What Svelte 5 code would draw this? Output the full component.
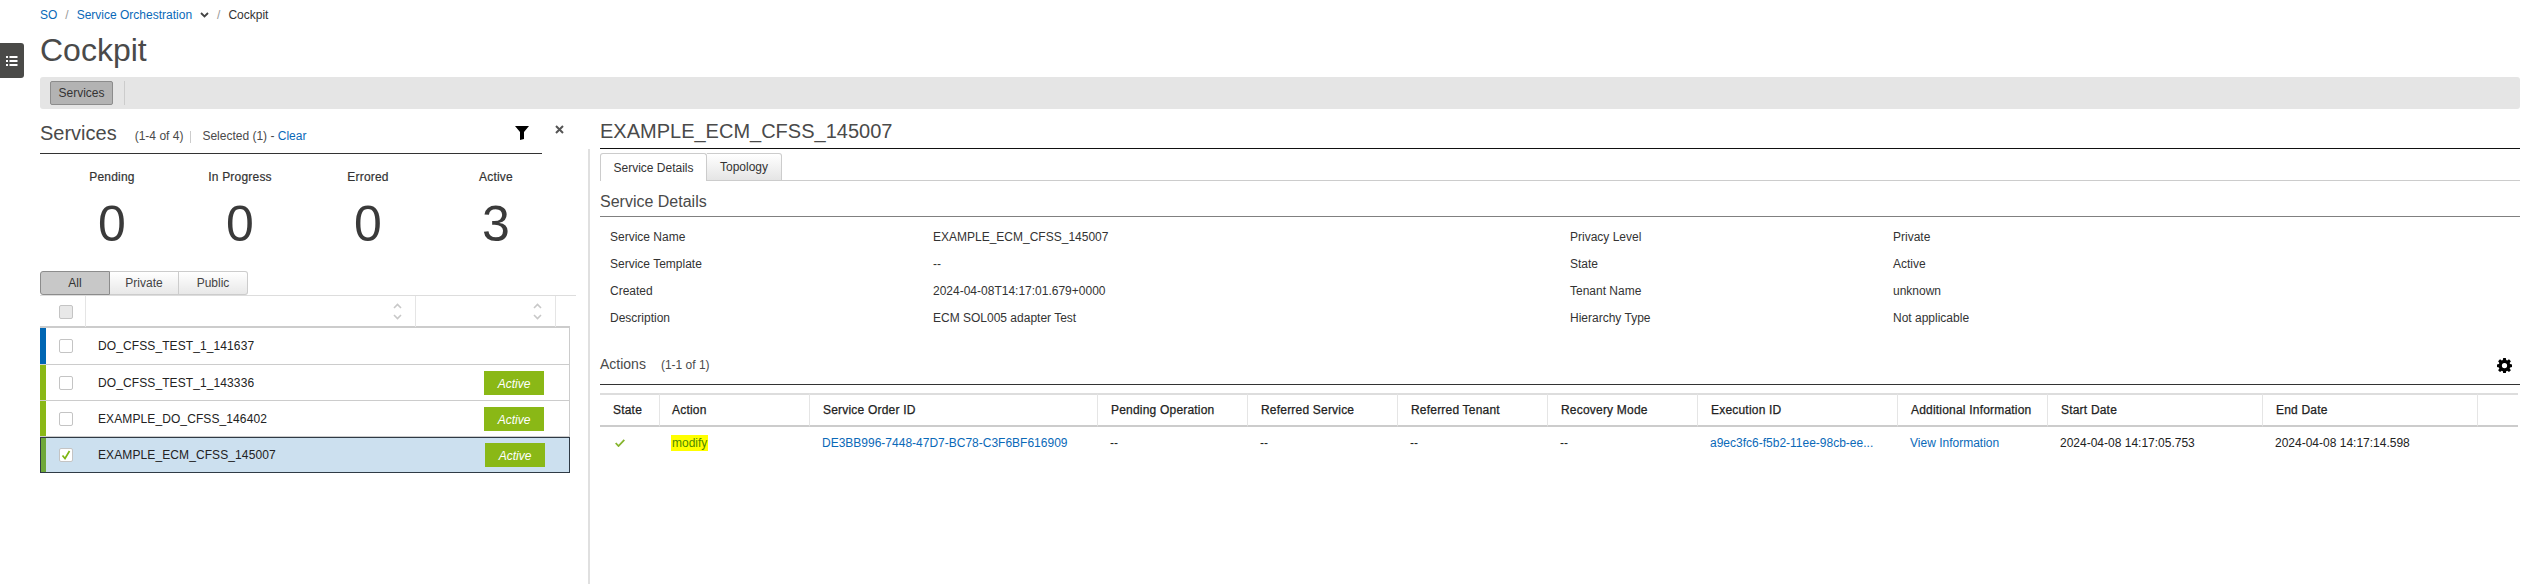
<script>
  const stats = [
    { label: 'Pending', value: 0 },
    { label: 'In Progress', value: 0 },
    { label: 'Errored', value: 0 },
    { label: 'Active', value: 3 }
  ];
  const services = [
    { name: 'DO_CFSS_TEST_1_141637', tone: 'blue', active: false, selected: false },
    { name: 'DO_CFSS_TEST_1_143336', tone: 'green', active: true, selected: false },
    { name: 'EXAMPLE_DO_CFSS_146402', tone: 'green', active: true, selected: false },
    { name: 'EXAMPLE_ECM_CFSS_145007', tone: 'green', active: true, selected: true }
  ];
  const detailsLeft = [
    ['Service Name', 'EXAMPLE_ECM_CFSS_145007'],
    ['Service Template', '--'],
    ['Created', '2024-04-08T14:17:01.679+0000'],
    ['Description', 'ECM SOL005 adapter Test']
  ];
  const detailsRight = [
    ['Privacy Level', 'Private'],
    ['State', 'Active'],
    ['Tenant Name', 'unknown'],
    ['Hierarchy Type', 'Not applicable']
  ];
  const columns = ['State', 'Action', 'Service Order ID', 'Pending Operation', 'Referred Service', 'Referred Tenant', 'Recovery Mode', 'Execution ID', 'Additional Information', 'Start Date', 'End Date', ''];
</script>

<div class="page">
  <button class="side-tab" aria-label="Open list">
    <svg width="12" height="12" viewBox="0 0 12 12" fill="#fff">
      <rect x="0" y="1" width="2" height="2" /><rect x="3.5" y="1" width="8" height="2" />
      <rect x="0" y="5" width="2" height="2" /><rect x="3.5" y="5" width="8" height="2" />
      <rect x="0" y="9" width="2" height="2" /><rect x="3.5" y="9" width="8" height="2" />
    </svg>
  </button>

  <nav class="crumbs">
    <a href="#so">SO</a><span class="slash">/</span>
    <a href="#orch">Service Orchestration</a>
    <svg class="chev" width="9" height="6" viewBox="0 0 9 6"><path d="M1 1l3.5 3.500L8 1" fill="none" stroke="#444" stroke-width="1.800" /></svg>
    <span class="slash">/</span><span class="here">Cockpit</span>
  </nav>
  <h1>Cockpit</h1>

  <div class="toolbar">
    <button class="tool-btn">Services</button>
    <span class="tool-sep"></span>
  </div>

  <div class="split">
    <section class="left">
      <header class="left-head">
        <h2>Services</h2>
        <span class="count">(1-4 of 4)</span>
        <span class="pipe"></span>
        <span class="sel">Selected (1) - <a href="#clear">Clear</a></span>
        <svg class="filter" width="14" height="14" viewBox="0 0 14 14"><path d="M0 0h14L9 6v7l-4 1V6z" fill="#000" /></svg>
      </header>
      <svg class="close" width="9" height="9" viewBox="0 0 9 9"><path d="M1 1l7 7M8 1L1 8" stroke="#555" stroke-width="2" /></svg>

      <div class="stats">
        {#each stats as s}
          <div class="stat">
            <div class="stat-label">{s.label}</div>
            <div class="stat-num">{s.value}</div>
          </div>
        {/each}
      </div>

      <div class="seg">
        <button class="on">All</button><button>Private</button><button>Public</button>
      </div>

      <div class="list-head">
        <div class="lh-check"><span class="box head-box"></span></div>
        <div class="lh-name">
          <svg width="9" height="17" viewBox="0 0 9 17"><path d="M1 5l3.500-3.500L8 5M1 12l3.500 3.500L8 12" fill="none" stroke="#c8c8c8" stroke-width="1.600" /></svg>
        </div>
        <div class="lh-state">
          <svg width="9" height="17" viewBox="0 0 9 17"><path d="M1 5l3.500-3.500L8 5M1 12l3.500 3.500L8 12" fill="none" stroke="#c8c8c8" stroke-width="1.600" /></svg>
        </div>
      </div>

      <ul class="rows">
        {#each services as s}
          <li class="row {s.tone}" class:selected={s.selected}>
            <span class="bar"></span>
            <span class="box">
              {#if s.selected}
                <svg width="10" height="10" viewBox="0 0 10 10"><path d="M1.500 5.500l2.500 3L8.500 1" fill="none" stroke="#7db512" stroke-width="1.700" /></svg>
              {/if}
            </span>
            <span class="row-name">{s.name}</span>
            {#if s.active}<span class="badge">Active</span>{/if}
          </li>
        {/each}
      </ul>
    </section>

    <section class="right">
      <h2 class="detail-title">EXAMPLE_ECM_CFSS_145007</h2>
      <div class="detail-body">
        <div class="tabs">
          <button class="tab current">Service Details</button>
          <button class="tab">Topology</button>
        </div>
        <h3>Service Details</h3>
        <div class="details">
          <dl>
            {#each detailsLeft as d}<dt>{d[0]}</dt><dd>{d[1]}</dd>{/each}
          </dl>
          <dl>
            {#each detailsRight as d}<dt>{d[0]}</dt><dd>{d[1]}</dd>{/each}
          </dl>
        </div>

        <div class="actions-head">
          <h4>Actions</h4>
          <span class="count">(1-1 of 1)</span>
          <svg class="gear" width="15" height="15" viewBox="0 0 16 16">
            <path fill="#000" fill-rule="evenodd" d="M6.600 0h2.800l.4 2.200 1.100.5 1.900-1.300 2 2-1.300 1.900.5 1.100 2 .4v2.800l-2 .4-.5 1.100 1.300 1.900-2 2-1.900-1.300-1.100.5-.4 2.200H6.600l-.4-2.200-1.100-.5-1.900 1.300-2-2 1.300-1.900-.5-1.100-2-.4V6.800l2-.4.5-1.100-1.300-1.900 2-2 1.900 1.300 1.100-.5zM8 5.200a2.800 2.800 0 1 0 0 5.600 2.800 2.800 0 0 0 0-5.600z" />
          </svg>
        </div>

        <table>
          <thead>
            <tr>{#each columns as c}<th>{c}</th>{/each}</tr>
          </thead>
          <tbody>
            <tr>
              <td><svg class="ok" width="10" height="8" viewBox="0 0 10 8"><path d="M.7 4l2.800 3L9.300.8" fill="none" stroke="#86b52e" stroke-width="1.800" /></svg></td>
              <td><mark>modify</mark></td>
              <td><a href="#order">DE3BB996-7448-47D7-BC78-C3F6BF616909</a></td>
              <td>--</td>
              <td>--</td>
              <td>--</td>
              <td>--</td>
              <td><a href="#exec">a9ec3fc6-f5b2-11ee-98cb-ee...</a></td>
              <td><a href="#info">View Information</a></td>
              <td>2024-04-08 14:17:05.753</td>
              <td>2024-04-08 14:17:14.598</td>
              <td></td>
            </tr>
          </tbody>
        </table>
      </div>
    </section>
  </div>
</div>

<style>
  :global(body) { margin: 0; background: #fff; }
  .page {
    position: relative;
    height: 584px;
    overflow: hidden;
    box-sizing: border-box;
    padding: 0 26px 0 40px;
    font-family: "Liberation Sans", Arial, sans-serif;
    font-size: 12px;
    color: #333;
  }
  a { color: #0a69b8; text-decoration: none; }
  button { font-family: inherit; font-size: 12px; margin: 0; cursor: pointer; }
  ul { list-style: none; margin: 0; padding: 0; }
  h1, h2, h3, h4, dl, dd, dt { margin: 0; font-weight: 400; }

  .side-tab {
    position: absolute; left: 0; top: 43px;
    width: 24px; height: 35px; padding: 0;
    background: #4a4a48; border: 0; border-radius: 0 3px 3px 0;
    display: flex; align-items: center; justify-content: center;
  }

  .crumbs { height: 29px; display: flex; align-items: center; white-space: nowrap; }
  .slash { color: #999; margin: 0 8px; }
  .chev { margin-left: 8px; }

  h1 { font-size: 32px; line-height: 42px; height: 48px; color: #4a4a4a; }

  .toolbar {
    height: 32px; background: #e5e5e5; border-radius: 3px;
    display: flex; align-items: center; padding-left: 10px; box-sizing: border-box;
  }
  .tool-btn {
    width: 63px; height: 24px; padding: 0; background: #b3b3b3; color: #333;
    border: 1px solid #8c8c8c; border-radius: 2px;
  }
  .tool-sep { width: 1px; height: 24px; background: #ccc; margin-left: 11px; }

  .split { display: flex; align-items: stretch; height: 475px; }

  .left { position: relative; width: 548px; flex: none; padding-top: 11px; box-sizing: border-box; }
  .left-head {
    position: relative; width: 502px; height: 34px; box-sizing: border-box;
    display: flex; align-items: baseline; white-space: nowrap;
    border-bottom: 1px solid #333;
  }
  .left-head h2 { font-size: 20px; line-height: 26px; color: #4a4a4a; }
  .count { margin-left: 18px; color: #4a4a4a; }
  .pipe { width: 1px; height: 12px; background: #ccc; margin-left: 7px; align-self: center; }
  .sel { margin-left: 11px; color: #4a4a4a; }
  .filter { position: absolute; left: 475px; top: 6px; }
  .close { position: absolute; left: 515px; top: 16px; }

  .stats { display: flex; width: 512px; margin-left: 8px; }
  .stat { width: 128px; text-align: center; }
  .stat-label { margin-top: 16px; line-height: 15px; letter-spacing: .2px; -webkit-text-stroke: .2px #333; }
  .stat-num { font-size: 50px; line-height: 60px; margin-top: 9px; color: #3a3a3a; }

  .seg { display: flex; height: 24px; margin-top: 17px; }
  .seg button {
    width: 69px; padding: 0; color: #444; background: linear-gradient(#fff, #e8e8e8);
    border: 1px solid #ccc; border-left: 0;
  }
  .seg button:last-child { border-radius: 0 3px 3px 0; }
  .seg .on {
    width: 70px; background: #c8c8c8; border: 1px solid #8c8c8c; border-radius: 3px 0 0 3px; color: #333;
  }

  .list-head {
    display: flex; width: 536px; height: 32px; box-sizing: border-box;
    border-top: 1px solid #ddd;
  }
  .lh-check {
    width: 46px; padding-left: 19px; box-sizing: border-box;
    display: flex; align-items: center; border-right: 1px solid #e5e5e5;
  }
  .lh-name, .lh-state {
    display: flex; align-items: center; justify-content: flex-end;
    padding-right: 13px; box-sizing: border-box; border-right: 1px solid #e5e5e5;
  }
  .lh-name { width: 330px; }
  .lh-state { width: 140px; }
  .box {
    width: 14px; height: 14px; box-sizing: border-box; background: #fff;
    border: 1px solid #c4c4c4; border-radius: 2px;
    display: flex; align-items: center; justify-content: center; flex: none;
  }
  .head-box { background: #e8e8e8; }

  .rows { width: 530px; box-sizing: border-box; border-top: 2px solid #ccc; margin-top: -1px; }
  .row {
    display: flex; align-items: center; height: 36px; box-sizing: border-box;
    border-bottom: 1px solid #ccc; border-right: 1px solid #ccc; color: #222;
  }
  .row:first-child { height: 37px; }
  .bar { width: 6px; align-self: stretch; flex: none; }
  .blue .bar { background: #0066b3; }
  .green .bar { background: #8ab816; }
  .row .box { margin-left: 13px; }
  .row-name { margin-left: 25px; flex: 1; letter-spacing: .1px; }
  .badge {
    width: 60px; height: 24px; background: #8ab816; color: #fff; font-style: italic;
    text-align: center; line-height: 26px; margin-right: 25px;
  }
  .selected { background: #cce0ef; border: 1px solid #2f3a45; border-left-width: 1px; }
  .selected .bar { background: #6ea83a; width: 5px; }
  .selected .badge { margin-right: 24px; }

  .right { flex: 1; min-width: 0; display: flex; flex-direction: column; }
  .detail-title {
    margin-left: 12px; padding-top: 9px; height: 40px; box-sizing: border-box;
    font-size: 20px; line-height: 26px; color: #4a4a4a; white-space: nowrap;
    border-bottom: 1px solid #111;
  }
  .detail-body { flex: 1; border-left: 2px solid #e0e0e0; padding-left: 10px; }

  .tabs {
    display: flex; height: 28px; margin-top: 4px; box-sizing: border-box;
    border-bottom: 1px solid #ccc;
  }
  .tab {
    height: 28px; padding: 0; color: #333; border: 1px solid #ccc; border-left: 0;
    border-radius: 0 3px 0 0; width: 75px; background: linear-gradient(#fff, #e5e5e5);
  }
  .tab.current {
    width: 107px; background: #fff; border-left: 1px solid #ccc; border-bottom: 0;
    border-radius: 3px 3px 0 0;
  }

  h3 {
    margin-top: 11px; padding-bottom: 4px; font-size: 16px; line-height: 20px;
    color: #4a4a4a; border-bottom: 1px solid #808080;
  }

  .details { display: flex; margin-top: 6px; }
  dl { flex: 0 0 960px; display: grid; grid-template-columns: 333px 1fr; grid-auto-rows: 27px; align-items: center; }
  dt { padding-left: 10px; color: #333; }
  dd { color: #333; }

  .actions-head {
    display: flex; align-items: baseline; height: 33px; box-sizing: border-box;
    margin-top: 21px; border-bottom: 1px solid #333;
  }
  h4 { font-size: 14px; line-height: 24px; color: #4a4a4a; }
  .actions-head .count { margin-left: 15px; }
  .gear { margin-left: auto; margin-right: 8px; align-self: flex-start; margin-top: 6px; }

  table { width: 1918px; margin-top: 8px; table-layout: fixed; border-spacing: 0; }
  th {
    height: 34px; padding: 0 0 0 13px; box-sizing: border-box; text-align: left;
    font-weight: 400; color: #222; letter-spacing: .2px; -webkit-text-stroke: .25px #222;
    border-top: 2px solid #ddd; border-bottom: 2px solid #ccc; border-right: 1px solid #e5e5e5;
    white-space: nowrap;
  }
  th:nth-child(1) { width: 60px; }
  th:nth-child(2) { width: 150px; padding-left: 12px; }
  th:nth-child(3) { width: 288px; }
  th:nth-child(4), th:nth-child(5), th:nth-child(6), th:nth-child(7), th:nth-child(9) { width: 150px; }
  th:nth-child(8) { width: 200px; }
  th:nth-child(10), th:nth-child(11) { width: 215px; }
  th:last-child { border-right: 0; }
  td { height: 32px; padding: 0 0 0 12px; color: #222; white-space: nowrap; }
  .ok { margin-left: 3px; }
  mark {
    display: inline-block; line-height: 16px; padding: 0 1px; margin-left: -1px;
    background: #ffff00; color: #4f8a00;
  }
</style>
